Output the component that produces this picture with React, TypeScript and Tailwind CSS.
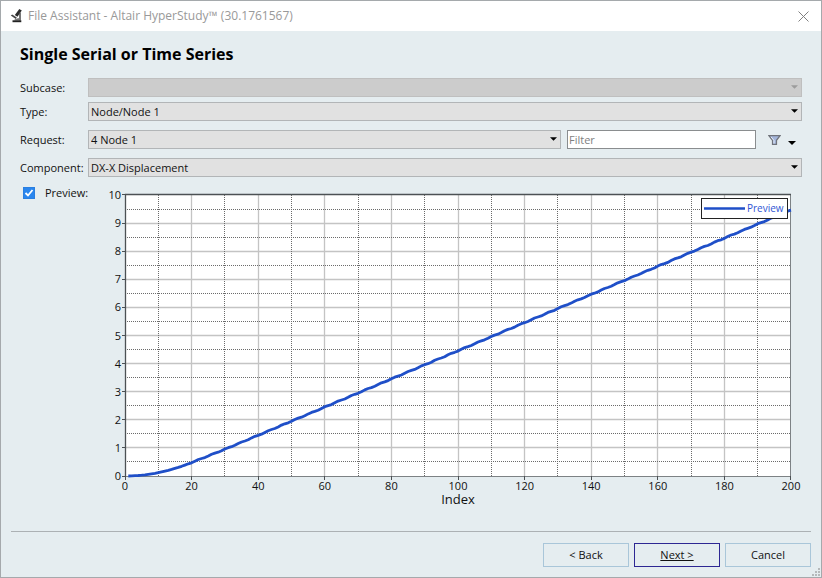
import React, { ReactNode, useState } from 'react';
import clsx from 'clsx';

interface SelectFieldProps {
  id: string;
  options: string[];
  disabled?: boolean;
}

interface ButtonProps {
  name: string;
  primary?: boolean;
}

// plot area inside the chart's viewBox
const LEFT = 37;
const TOP = 8;
const WIDTH = 666;
const HEIGHT = 281;
const BOTTOM = TOP + HEIGHT;
const RIGHT = LEFT + WIDTH;

const toX = (index: number) => LEFT + (index / 200) * WIDTH;
const toY = (value: number) => BOTTOM - (value / 10) * HEIGHT;
const crisp = (n: number) => Math.floor(n) + 0.5;

const displacement = (t: number) => {
  if (t < 20) return 0.0012 * t * t;
  const base = t < 30 ? 0.48 + (t - 20) * 0.047 : 0.95 + (t - 30) * 0.0501;
  return base + 0.012 * Math.sin((t * 2 * Math.PI) / 4.2);
};

const points = Array.from({ length: 200 }, (_, i) => i + 1)
  .map((t) => `${toX(t).toFixed(1)},${toY(displacement(t)).toFixed(1)}`)
  .join(' ');

const steps = Array.from({ length: 11 }, (_, i) => i);
const halves = steps.slice(0, 10);

const Arrow = ({ className }: { className?: string }) => (
  <svg viewBox="0 0 8 4" className={className} aria-hidden="true">
    <path d="M0 0h8L4 4z" fill="currentColor" />
  </svg>
);

const SelectField = ({ id, options, disabled }: SelectFieldProps) => (
  <div className="relative min-w-0 flex-1">
    <select
      id={id}
      disabled={disabled}
      className={clsx(
        'block h-[19px] w-full appearance-none border px-0.5 text-[11px] leading-4 outline-none',
        disabled
          ? 'border-[#bfbfbf] bg-[#cccccc]'
          : 'border-[#b2b5b7] bg-[#e1e1e1]'
      )}
    >
      {options.map((option) => (
        <option key={option}>{option}</option>
      ))}
    </select>
    <Arrow
      className={clsx(
        'pointer-events-none absolute top-[7px] right-1 h-1 w-[7px]',
        disabled ? 'text-[#9c9c9c]' : 'text-black'
      )}
    />
  </div>
);

const Row = ({
  id,
  label,
  children,
}: {
  id: string;
  label: string;
  children: ReactNode;
}) => (
  <div className="flex h-[19px] items-center">
    <label htmlFor={id} className="w-[68px] shrink-0">
      {label}
    </label>
    {children}
  </div>
);

const Button = ({ name, primary }: ButtonProps) => (
  <button
    type="button"
    className={clsx(
      'h-6 w-[86px] border text-[11px]',
      primary ? 'border-[#2d2793] underline' : 'border-[#a9c6d9]'
    )}
  >
    {name}
  </button>
);

const PreviewChart = () => (
  <svg viewBox="0 0 714 321" className="w-full" role="img" aria-label="Preview">
    <rect x={LEFT} y={TOP} width={WIDTH} height={HEIGHT} fill="#fff" />
    <g stroke="#c4c4c4" strokeWidth="1.3">
      {steps.slice(1, 10).map((i) => (
        <g key={i}>
          <path d={`M${crisp(toX(i * 20))} ${TOP}V${BOTTOM}`} />
          <path d={`M${LEFT} ${crisp(toY(i))}H${RIGHT}`} />
        </g>
      ))}
    </g>
    <g stroke="#6b6b6b" strokeDasharray="1 1">
      {halves.map((i) => (
        <g key={i}>
          <path d={`M${crisp(toX(i * 20 + 10))} ${TOP}V${BOTTOM}`} />
          <path d={`M${LEFT} ${crisp(toY(i + 0.5))}H${RIGHT}`} />
        </g>
      ))}
    </g>
    <path
      d={`M${RIGHT - 0.5} ${TOP}V${BOTTOM}M${LEFT} ${BOTTOM + 0.5}H${RIGHT}`}
      stroke="#7d8285"
      fill="none"
    />
    <path
      d={`M${LEFT + 0.5} ${BOTTOM}V${TOP - 0.5}H${RIGHT}`}
      stroke="#4c5154"
      strokeWidth="1.3"
      fill="none"
    />
    <g stroke="#4c5154">
      {steps.map((i) => (
        <g key={i}>
          <path
            d={`M${Math.min(crisp(toX(i * 20)), RIGHT - 0.5)} ${BOTTOM}v4`}
          />
          <path d={`M${LEFT - 3} ${crisp(toY(i) - (i === 10 ? 1 : 0))}h3`} />
        </g>
      ))}
    </g>
    <g fontSize="11" fill="#111">
      {steps.map((i) => (
        <g key={i}>
          <text x={toX(i * 20)} y={BOTTOM + 14} textAnchor="middle">
            {i * 20}
          </text>
          <text x={LEFT - 4} y={Math.round(toY(i)) + 4} textAnchor="end">
            {i}
          </text>
        </g>
      ))}
    </g>
    <text
      x={LEFT + WIDTH / 2}
      y={BOTTOM + 28}
      fontSize="13"
      fill="#111"
      textAnchor="middle"
    >
      Index
    </text>
    <polyline
      points={points}
      fill="none"
      stroke="#1f4fc8"
      strokeWidth="2.8"
      strokeLinejoin="round"
    />
    <rect x="613.5" y="11.5" width="86" height="20" fill="#fff" stroke="#222" />
    <path d="M616 21.5h41" stroke="#1f4fc8" strokeWidth="2.4" />
    <text x="659" y="25" fontSize="10" fill="#2f55d4">
      Preview
    </text>
  </svg>
);

const App = () => {
  const [preview, setPreview] = useState(true);
  const [filter, setFilter] = useState('');

  return (
    <div className="flex min-h-screen flex-col border border-[#a5a9ac] bg-[#e5edf0] font-['Open_Sans','Noto_Sans',sans-serif] text-[11px] leading-4 text-[#111111]">
      <header className="flex h-[30px] shrink-0 items-center bg-white pr-3 pl-[9px]">
        <svg
          viewBox="0 0 14 14"
          className="h-[14px] w-[14px]"
          aria-hidden="true"
        >
          <path d="M9.300 0l2.500 1.600-4.300 6.200-2.700-1.800z" fill="#2c2c2c" />
          <path d="M.8 6.600l1.400-1.200 4.600 3-1 1.500z" fill="#444" />
          <path
            d="M10 3.500v8"
            fill="none"
            stroke="#4a4a4a"
            strokeWidth="1.500"
          />
          <path d="M4.500 10.500l4-1.500 1.700 2.500H4.500z" fill="#777" />
          <path d="M2.500 11.300h8.800v1.900H2.500z" fill="#222" />
        </svg>
        <span className="ml-1 flex-1 text-xs text-[#999999]">
          File Assistant - Altair HyperStudy™ (30.1761567)
        </span>
        <button type="button" aria-label="Close" className="text-[#808080]">
          <svg viewBox="0 0 11 11" className="h-[11px] w-[11px]">
            <path d="M.5.5l10 10M10.500.5l-10 10" stroke="currentColor" />
          </svg>
        </button>
      </header>

      <main className="flex-1 pr-[19px] pl-[19px]">
        <h1 className="mt-3 mb-3 text-base leading-[23px] font-bold text-black">
          Single Serial or Time Series
        </h1>
        <Row id="subcase" label="Subcase:">
          <SelectField id="subcase" options={[]} disabled />
        </Row>
        <div className="mt-[5px] flex flex-col gap-[9px]">
          <Row id="type" label="Type:">
            <SelectField id="type" options={['Node/Node 1']} />
          </Row>
          <Row id="request" label="Request:">
            <SelectField id="request" options={['4 Node 1']} />
            <input
              aria-label="Filter"
              placeholder="Filter"
              value={filter}
              onChange={(e) => setFilter(e.target.value)}
              className="ml-1.5 h-[19px] w-[189px] border border-[#8a8d8f] bg-white px-px outline-none placeholder:text-[#7f7f7f]"
            />
            <button
              type="button"
              aria-label="Filter options"
              className="ml-3 flex w-[34px] items-center gap-[7px]"
            >
              <svg viewBox="0 0 13 10" className="h-[10px] w-[13px]">
                <path
                  d="M1 .7h11L8.500 5.300v4h-4v-4z"
                  fill="#a3b5da"
                  stroke="#70747c"
                  strokeWidth="1.200"
                />
                <path d="M3 1.800l3 3.700v3" stroke="#e8eefa" fill="none" />
              </svg>
              <Arrow className="mt-1.5 h-1 w-2 text-black" />
            </button>
          </Row>
          <Row id="component" label="Component:">
            <SelectField id="component" options={['DX-X Displacement']} />
          </Row>
        </div>
        <div className="mt-2 flex items-start">
          <label className="flex w-[68px] shrink-0 items-center pl-[3px]">
            <span className="relative mr-2.5 h-3 w-3 shrink-0">
              <input
                type="checkbox"
                checked={preview}
                onChange={(e) => setPreview(e.target.checked)}
                className="block h-3 w-3 appearance-none border border-[#2a7fe0] bg-white checked:bg-[#2a86ee]"
              />
              {preview && (
                <svg
                  viewBox="0 0 12 12"
                  className="pointer-events-none absolute inset-0"
                >
                  <path
                    d="M2.500 6l2.500 2.500 4.500-5.500"
                    fill="none"
                    stroke="#fff"
                    strokeWidth="1.800"
                  />
                </svg>
              )}
            </span>
            Preview:
          </label>
          <div className="mt-0.5 min-w-0 flex-1">
            {preview && <PreviewChart />}
          </div>
        </div>
      </main>

      <footer className="relative mx-2.5 flex justify-end gap-[5px] border-t border-[#acb1b4] pt-[11px] pb-2.5">
        <Button name="< Back" />
        <Button name="Next >" primary />
        <Button name="Cancel" />
        <svg
          viewBox="0 0 10 10"
          className="absolute -right-2.5 bottom-0 h-2.5 w-2.5"
          aria-hidden="true"
        >
          <path
            d="M7 1h2v2H7zM4 4h2v2H4zM7 4h2v2H7zM1 7h2v2H1zM4 7h2v2H4zM7 7h2v2H7z"
            fill="#b5b9bb"
          />
        </svg>
      </footer>
    </div>
  );
};

export default App;
